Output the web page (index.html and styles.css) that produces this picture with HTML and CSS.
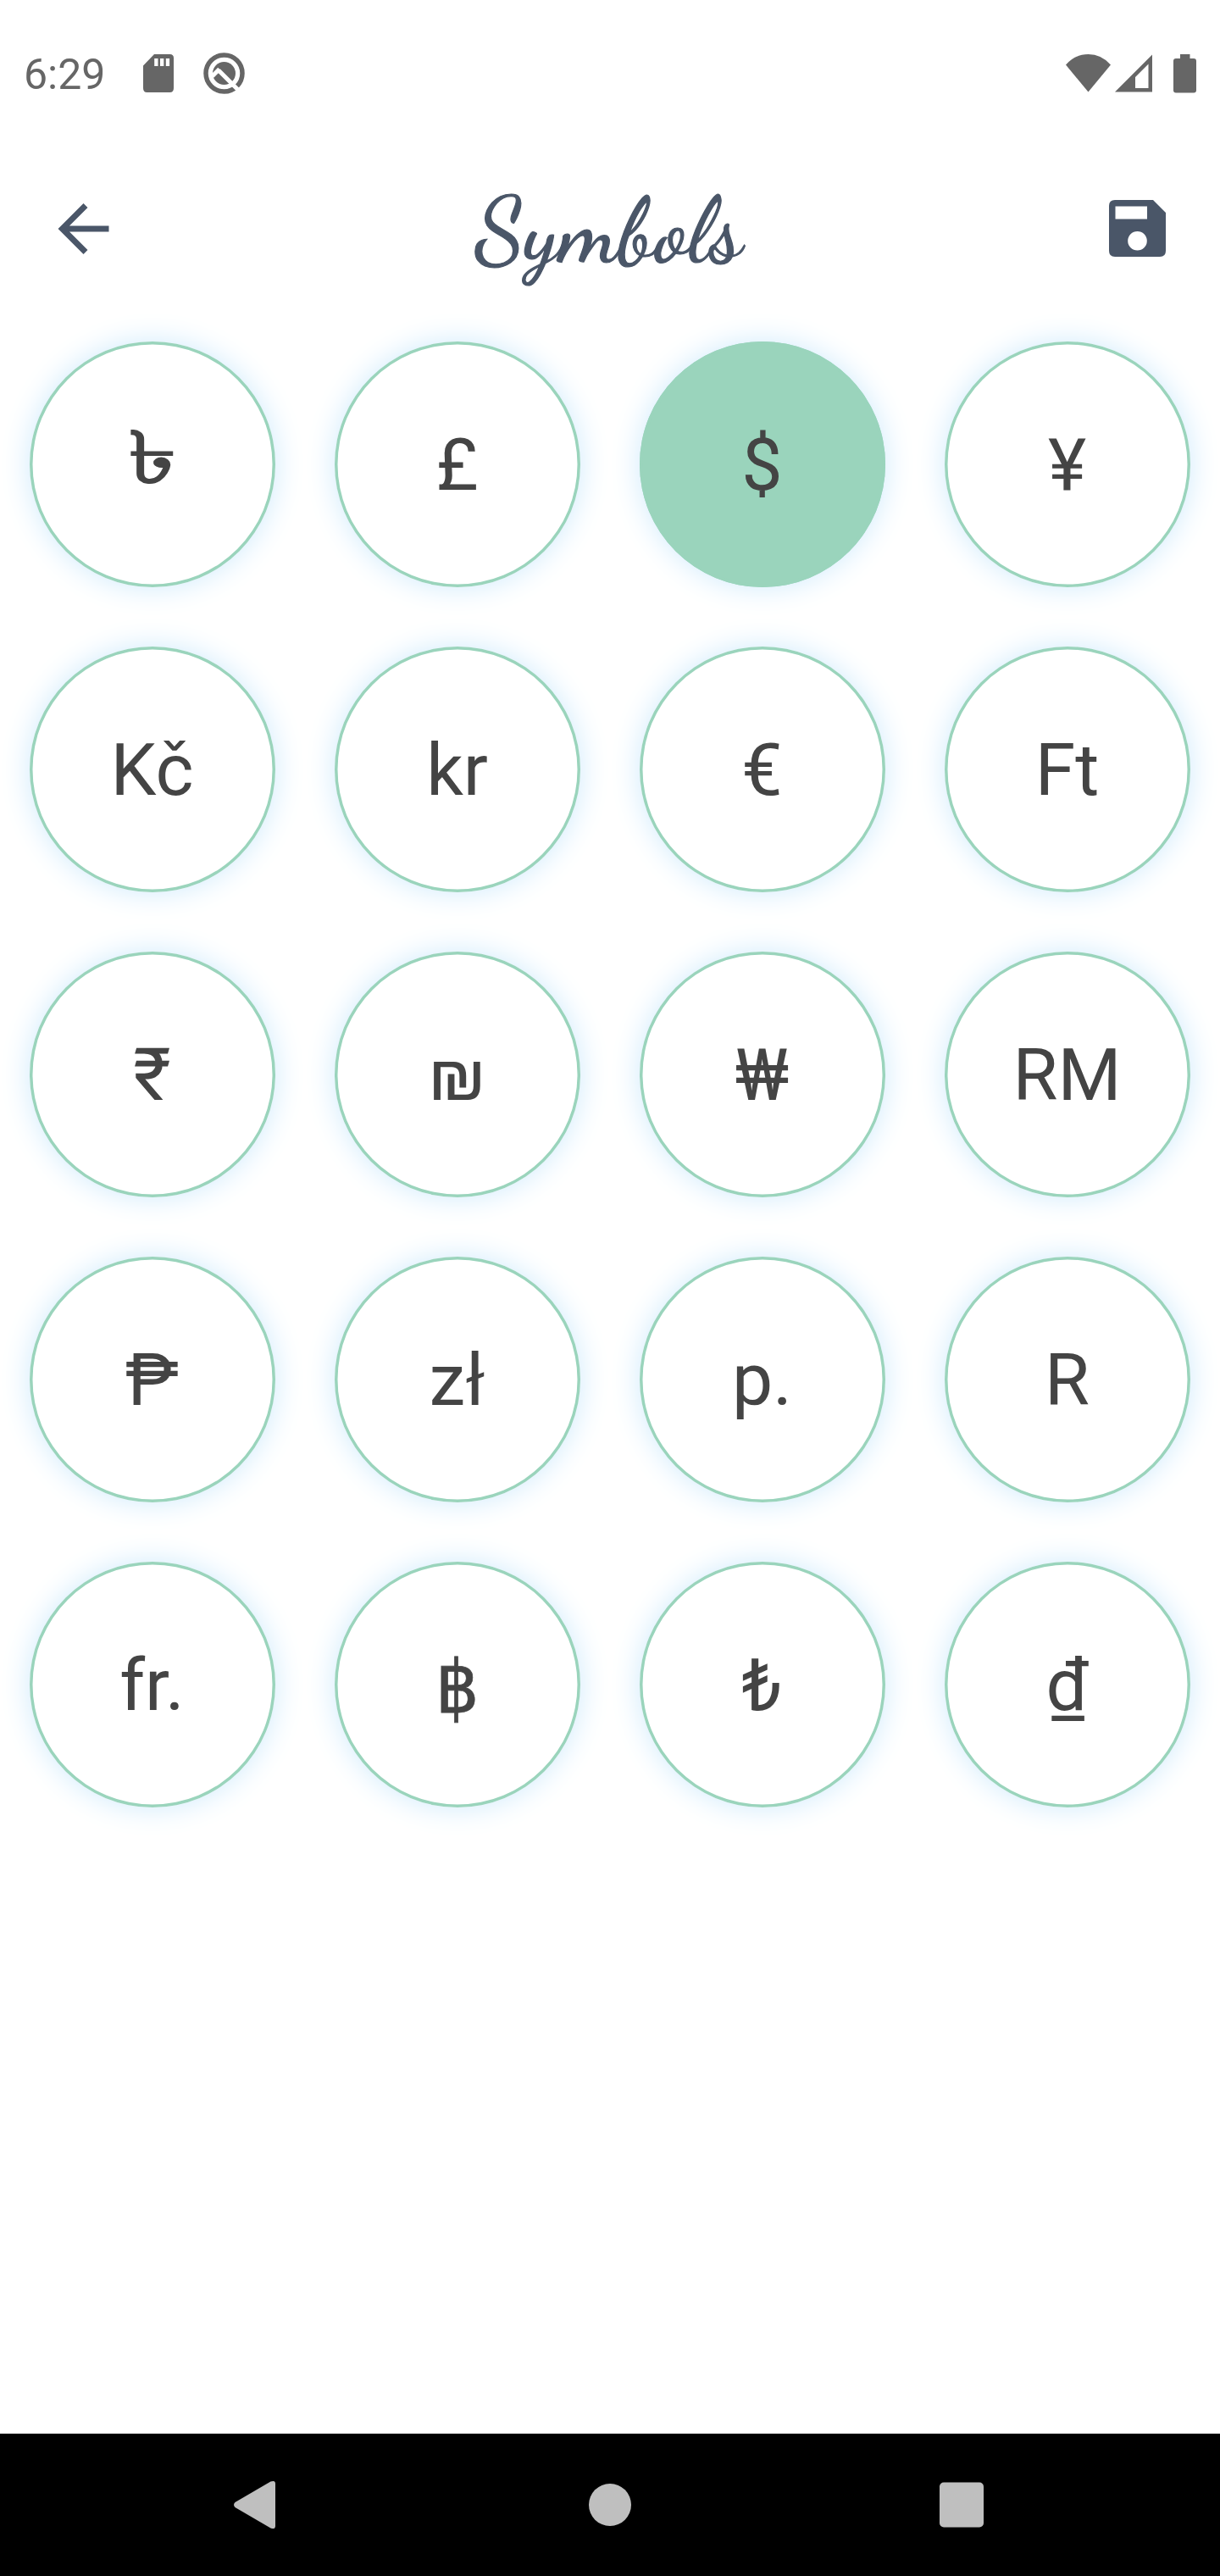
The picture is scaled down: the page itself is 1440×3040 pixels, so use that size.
FILE: index.html
```html
<!DOCTYPE html>
<html lang="en">
<head>
<meta charset="utf-8">
<title>Symbols</title>
<link rel="stylesheet" href="styles.css">
</head>
<body>
<header class="status">
  <span class="time">6:29</span>
  <svg class="sd" viewBox="0 0 36 45"><path fill-rule="evenodd" d="M13 0H31.500Q36 0 36 4.500V40Q36 45 31.500 45H4.500Q0 45 0 40V13.500ZM13.200 5V14H17.500V5ZM20 5V14H24.300V5ZM26.800 5V14H31.100V5Z"/></svg>
  <svg class="quick" viewBox="0 0 49 49">
    <circle class="ring" cx="24.500" cy="24.500" r="21.500"/>
    <circle cx="24.500" cy="24.500" r="13.500"/>
    <path class="cut" d="M18 21L43 46M10.500 28L19 19.500"/>
  </svg>
  <span class="spacer"></span>
  <svg class="signals" viewBox="0 0 154 45">
    <path d="M0 12.500Q11 0 26.500 0T53 12.500L26.500 44.500Z"/>
    <path fill-rule="evenodd" d="M58 44.500L102 .5V44.500ZM82 27V40H97.500V11.500Z"/>
    <path d="M135 0H146.500V5H151Q154 5 154 8V42.500Q154 45.500 151 45.500H130Q127 45.500 127 42.500V8Q127 5 130 5H135Z"/>
  </svg>
</header>
<nav class="bar">
  <svg class="back" viewBox="0 0 60 60"><path d="M59.500 30H8M32 2.500L4.500 30L32 57.500"/></svg>
  <h1>Symbols</h1>
  <svg class="save" viewBox="0 0 67 67"><path fill-rule="evenodd" d="M7 0H52L67 15V60Q67 67 60 67H7Q0 67 0 60V7Q0 0 7 0ZM7.500 7.500V22.500H45V7.500ZM33.500 37A11.300 11.300 0 1 0 33.500 59.600A11.300 11.300 0 1 0 33.500 37Z"/></svg>
</nav>
<main class="grid">
  <button><span class="taka">৳</span></button><button>£</button><button class="selected">$</button><button>¥</button>
  <button>Kč</button><button>kr</button><button>€</button><button>Ft</button>
  <button>₹</button><button>₪</button><button>₩</button><button>RM</button>
  <button>₱</button><button>zł</button><button>p.</button><button>R</button>
  <button>fr.</button><button><span class="baht">฿</span></button><button>₺</button><button>₫</button>
</main>
<footer class="system">
  <svg viewBox="0 0 56 56"><path d="M46.500 .5Q52 -1.500 52 3V53Q52 57.500 46.500 55.500L4.500 31Q1.500 28 4.500 25Z"/></svg>
  <svg class="home" viewBox="0 0 56 56"><circle cx="28" cy="28" r="25"/></svg>
  <svg viewBox="0 0 56 56"><rect x="2" y="1.500" width="52" height="53" rx="5"/></svg>
</footer>
</body>
</html>
```
FILE: styles.css
```css
body {
  margin: 0;
  width: 1440px;
  height: 3040px;
  background: #fff;
  font-family: Roboto, sans-serif;
  display: flex;
  flex-direction: column;
}
svg { display: block; flex: none; overflow: visible; }
.status {
  height: 172px;
  box-sizing: border-box;
  padding: 0 28px;
  display: flex;
  align-items: center;
  color: #666;
  fill: #666;
}
.time { width: 141px; font-size: 50px; line-height: 58px; padding-top: 4px; }
.sd { width: 36px; height: 45px; margin-right: 35px; }
.quick { width: 49px; height: 49px; }
.ring { fill: none; stroke: #666; stroke-width: 5.5; }
.cut { fill: none; stroke: #fff; stroke-width: 5; }
.spacer { flex: 1; }
.signals { width: 154px; height: 45px; }
.bar {
  height: 196px;
  box-sizing: border-box;
  padding: 0 64px 1px 69px;
  display: flex;
  align-items: center;
  justify-content: space-between;
  color: #4a5668;
  fill: #4a5668;
}
.back { width: 60px; height: 60px; fill: none; stroke: #4a5668; stroke-width: 7; }
.save { width: 67px; height: 67px; }
h1 {
  margin: 0;
  padding-top: 4px;
  font: 400 108.5px/132px "Dancing Script", cursive;
  -webkit-text-stroke: 1.2px #4a5668;
}
.grid {
  flex: 1;
  display: grid;
  grid-template-columns: repeat(4, 360px);
  grid-auto-rows: 360px;
  place-items: center;
  align-content: start;
}
button {
  box-sizing: border-box;
  width: 290px;
  height: 290px;
  padding: 0 1px 0 0;
  border: 0;
  border-radius: 50%;
  background: #fff;
  box-shadow: inset 0 0 0 3.5px #9ad4bc, 0 0 35px #cfeafc;
  color: #444;
  font: 86px Roboto, sans-serif;
}
.selected { background: #9ad4bc; }
.taka { display: inline-block; transform: translate(1px, -3px) scale(1.35, 1); -webkit-text-stroke: 1.5px #444; }
.baht { display: inline-block; transform: translateY(3px) scaleX(.94); -webkit-text-stroke: .8px #444; }
.system {
  height: 168px;
  box-sizing: border-box;
  padding: 0 277px 0 273px;
  display: flex;
  align-items: center;
  justify-content: space-between;
  background: #000;
  fill: #bfbfbf;
}
.system svg { width: 56px; height: 56px; }
.system .home { margin-left: 4px; }
```
